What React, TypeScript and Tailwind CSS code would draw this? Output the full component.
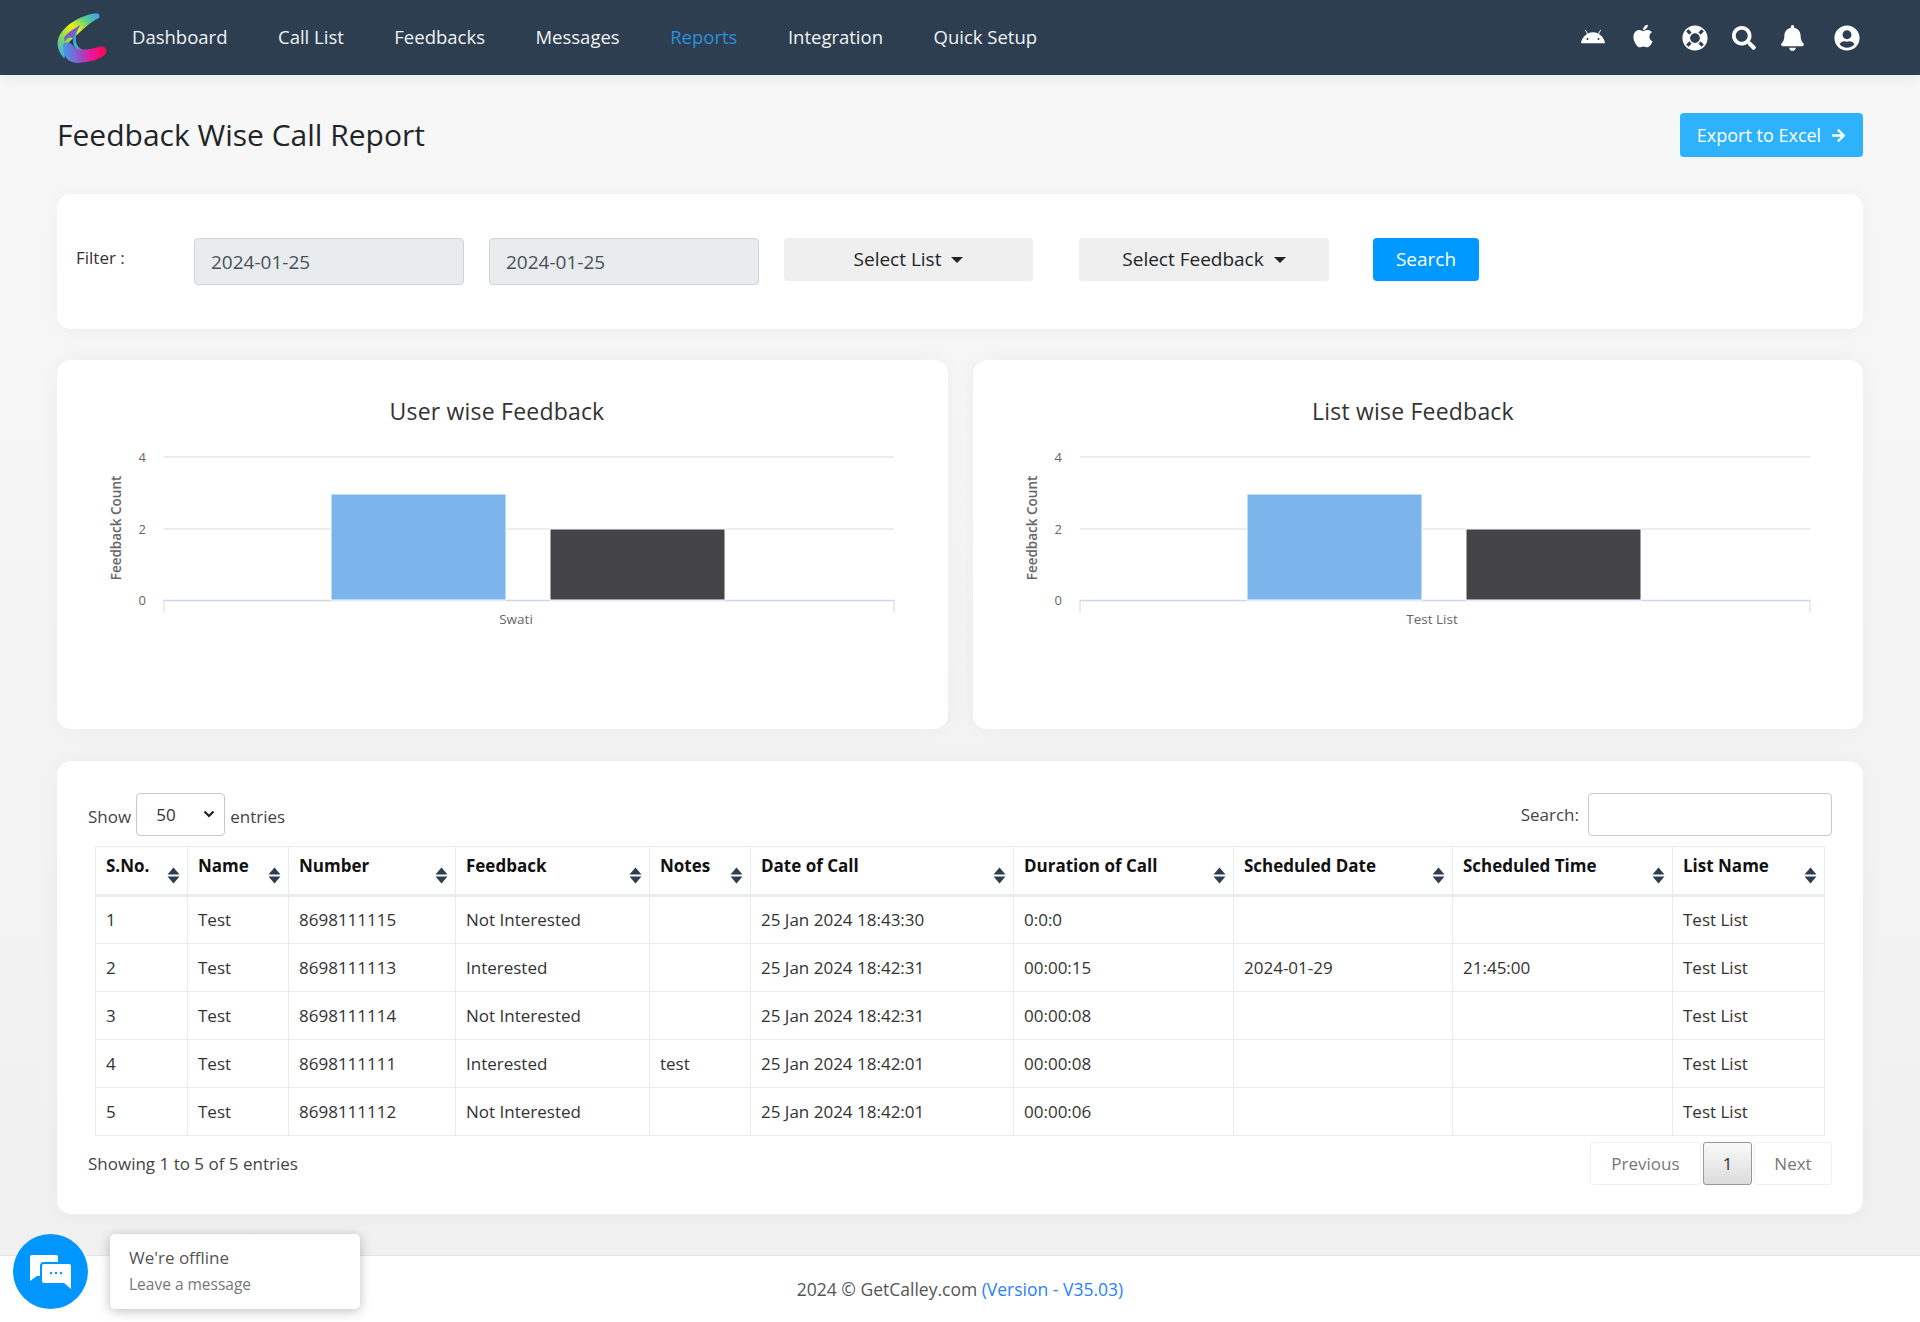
import { FaAndroid, FaApple, FaLifeRing, FaSearch, FaBell, FaUserCircle, FaArrowRight } from "react-icons/fa";

const navItems = ["Dashboard", "Call List", "Feedbacks", "Messages", "Reports", "Integration", "Quick Setup"];

const columns = [
  { label: "S.No.", w: "w-[92px]" },
  { label: "Name", w: "w-[101px]" },
  { label: "Number", w: "w-[167px]" },
  { label: "Feedback", w: "w-[194px]" },
  { label: "Notes", w: "w-[101px]" },
  { label: "Date of Call", w: "w-[263px]" },
  { label: "Duration of Call", w: "w-[220px]" },
  { label: "Scheduled Date", w: "w-[219px]" },
  { label: "Scheduled Time", w: "w-[220px]" },
  { label: "List Name", w: "w-[152px]" },
];

const rows = [
  ["1", "Test", "8698111115", "Not Interested", "", "25 Jan 2024 18:43:30", "0:0:0", "", "", "Test List"],
  ["2", "Test", "8698111113", "Interested", "", "25 Jan 2024 18:42:31", "00:00:15", "2024-01-29", "21:45:00", "Test List"],
  ["3", "Test", "8698111114", "Not Interested", "", "25 Jan 2024 18:42:31", "00:00:08", "", "", "Test List"],
  ["4", "Test", "8698111111", "Interested", "test", "25 Jan 2024 18:42:01", "00:00:08", "", "", "Test List"],
  ["5", "Test", "8698111112", "Not Interested", "", "25 Jan 2024 18:42:01", "00:00:06", "", "", "Test List"],
];

function Logo() {
  return (
    <svg width="50" height="50" viewBox="50 35 150 150" className="shrink-0">
      <defs>
        <linearGradient id="lgA" gradientUnits="userSpaceOnUse" x1="178" y1="42" x2="70" y2="175">
          <stop offset="0" stopColor="#3f9bf0" />
          <stop offset="0.22" stopColor="#55d08a" />
          <stop offset="0.45" stopColor="#f4ee10" />
          <stop offset="0.68" stopColor="#8fe04a" />
          <stop offset="1" stopColor="#38a8f0" />
        </linearGradient>
        <linearGradient id="lgB" gradientUnits="userSpaceOnUse" x1="70" y1="170" x2="198" y2="150">
          <stop offset="0" stopColor="#3f9fef" />
          <stop offset="0.35" stopColor="#8a58c8" />
          <stop offset="0.65" stopColor="#f0109a" />
          <stop offset="1" stopColor="#ff0a4c" />
        </linearGradient>
        <linearGradient id="lgC" gradientUnits="userSpaceOnUse" x1="120" y1="80" x2="150" y2="150">
          <stop offset="0" stopColor="#3f8fe8" />
          <stop offset="0.6" stopColor="#38b8d8" />
          <stop offset="1" stopColor="#e01aa0" />
        </linearGradient>
      </defs>
      <path d="M166 36 C176 35 182 44 175 51 C150 62 124 88 102 108 C84 122 78 132 72 172 C54 152 46 130 56 106 C72 72 120 42 166 36 Z" fill="url(#lgA)" />
      <path d="M72 108 C84 92 104 80 120 72 C108 90 104 104 100 112 C92 106 82 106 72 122 Z" fill="#7a5cc4" />
      <path d="M120 72 C106 92 102 118 112 134 C122 148 138 146 150 143 L156 150 C132 162 108 150 100 130 C94 112 104 90 120 72 Z" fill="url(#lgC)" />
      <path d="M68 128 C76 122 90 120 102 138 C114 152 130 148 176 137 C192 132 202 144 197 156 C186 172 150 184 112 185 C88 185 66 170 68 128 Z" fill="url(#lgB)" />
    </svg>
  );
}

function SortIcon() {
  return (
    <svg width="13" height="17" viewBox="0 0 13 17" className="shrink-0 mt-[9px] mr-[-3px]">
      <path d="M6.5 0.5 L12.5 7.5 H0.5 Z" fill="#2c3e50" />
      <path d="M0.5 9.5 H12.5 L6.5 16.5 Z" fill="#2c3e50" />
    </svg>
  );
}

function Chart({ dx, label }: { dx: number; label: string }) {
  return (
    <svg width="891" height="369" viewBox="0 0 891 369" className="block" style={{ fontFamily: "'Open Sans', sans-serif" }}>
      <text x={440 + dx} y="60" textAnchor="middle" fontSize="23" fill="#333333" letterSpacing="0.2">
        {label === "Swati" ? "User wise Feedback" : "List wise Feedback"}
      </text>
      <line x1="107" x2="837" y1="97" y2="97" stroke="#e6e6e6" strokeWidth="1.4" />
      <line x1="107" x2="837" y1="169" y2="169" stroke="#e6e6e6" strokeWidth="1.4" />
      <line x1="107" x2="837" y1="240.5" y2="240.5" stroke="#ccd6eb" strokeWidth="1.4" />
      <line x1="107" x2="107" y1="240" y2="252" stroke="#ccd6eb" />
      <line x1="837" x2="837" y1="240" y2="252" stroke="#ccd6eb" />
      <rect x="274" y="134" width="175" height="106" fill="#7cb5ec" stroke="#ffffff" strokeWidth="1" />
      <rect x="493" y="169" width="175" height="71" fill="#434348" stroke="#ffffff" strokeWidth="1" />
      <g fontSize="13" fill="#666666" textAnchor="end">
        <text x="89" y="102">4</text>
        <text x="89" y="174">2</text>
        <text x="89" y="245">0</text>
      </g>
      <text x="459" y="264" textAnchor="middle" fontSize="13.5" fill="#666666">{label}</text>
      <text transform="translate(64 168) rotate(-90)" textAnchor="middle" fontSize="13.5" fontWeight="600" fill="#666666">
        Feedback Count
      </text>
    </svg>
  );
}

export default function App() {
  return (
    <div className="relative min-h-[1322px] flex flex-col bg-gradient-to-b from-[#f8f8f8] to-[#f0f0f0] font-['Open_Sans',sans-serif] text-[#212529]">
      <nav className="h-[75px] bg-[#2c3e50] flex items-center pl-[57px] pr-[60px] shadow-[0_4px_12px_rgba(0,0,0,0.06)]">
        <Logo />
        <ul className="flex ml-[25px] gap-[50.5px] text-[18.5px] leading-none">
          {navItems.map((n) => (
            <li key={n} className={n === "Reports" ? "text-[#2d8fdc]" : "text-[#f0f2f4]"}>{n}</li>
          ))}
        </ul>
        <div className="ml-auto flex items-center text-white">
          <FaAndroid className="w-[24px] h-[24px]" />
          <FaApple className="w-[26px] h-[26px] ml-[25px] mb-[3px]" />
          <FaLifeRing className="w-[26px] h-[26px] ml-[26px]" />
          <FaSearch className="w-[24px] h-[24px] ml-[24px]" />
          <FaBell className="w-[25px] h-[26px] ml-[24px]" />
          <FaUserCircle className="w-[26px] h-[26px] ml-[29px]" />
        </div>
      </nav>

      <main className="px-[57px]">
        <div className="flex items-center justify-between pt-[38px]">
          <h1 className="text-[30px] leading-[44px] text-[#212529] font-normal">Feedback Wise Call Report</h1>
          <button className="w-[183px] h-[44px] bg-[#2db2fb] text-white text-[18px] rounded-[4px] flex items-center justify-center gap-[10px]">
            Export to Excel <FaArrowRight className="w-[15px] h-[15px]" />
          </button>
        </div>

        <section className="mt-[37px] h-[135px] bg-white rounded-[14px] shadow-[0_0_20px_rgba(0,0,0,0.04)] pl-[19px] pt-[44px] flex items-start">
          <span className="w-[118px] text-[17px] leading-[40px] text-[#333]">Filter :</span>
          <input readOnly value="2024-01-25" className="w-[270px] h-[47px] bg-[#e9ecef] border border-[#ced4da] rounded-[4px] px-[16px] text-[19px] text-[#495057]" />
          <input readOnly value="2024-01-25" className="ml-[25px] w-[270px] h-[47px] bg-[#e9ecef] border border-[#ced4da] rounded-[4px] px-[16px] text-[19px] text-[#495057]" />
          <button className="ml-[25px] w-[249px] h-[43px] bg-[#efefef] rounded-[4px] text-[19px] text-[#212529] flex items-center justify-center gap-[10px]">
            Select List <span className="w-0 h-0 border-x-[6px] border-x-transparent border-t-[6px] border-t-[#212529]" />
          </button>
          <button className="ml-[46px] w-[250px] h-[43px] bg-[#efefef] rounded-[4px] text-[19px] text-[#212529] flex items-center justify-center gap-[10px]">
            Select Feedback <span className="w-0 h-0 border-x-[6px] border-x-transparent border-t-[6px] border-t-[#212529]" />
          </button>
          <button className="ml-[44px] w-[106px] h-[43px] bg-[#0099ff] rounded-[4px] text-[19px] text-white">Search</button>
        </section>

        <section className="mt-[31px] grid grid-cols-[891px_890px] gap-[25px]">
          <div className="h-[369px] bg-white rounded-[14px] shadow-[0_0_20px_rgba(0,0,0,0.04)] overflow-hidden">
            <Chart dx={0} label="Swati" />
          </div>
          <div className="h-[369px] bg-white rounded-[14px] shadow-[0_0_20px_rgba(0,0,0,0.04)] overflow-hidden">
            <Chart dx={0} label="Test List" />
          </div>
        </section>

        <section className="mt-[32px] h-[453px] bg-white rounded-[14px] shadow-[0_0_20px_rgba(0,0,0,0.04)] px-[31px] pt-[32px] text-[17px]">
          <div className="flex items-start justify-between h-[43px]">
            <div className="flex items-center text-[#444] h-[43px] pt-[4px]">
              Show
              <div className="mx-[5px] mt-[-4px] w-[89px] h-[43px] border border-[#c8c8c8] rounded-[4px] flex items-center justify-between pl-[19px] pr-[9px] text-[#333]">
                50
                <svg width="12" height="8" viewBox="0 0 12 8" className="mb-[2px]"><path d="M1.5 1.5 L6 6 L10.5 1.5" fill="none" stroke="#222" strokeWidth="2.2" /></svg>
              </div>
              entries
            </div>
            <div className="flex items-center text-[#444] h-[43px]">
              Search:
              <input className="ml-[9px] w-[244px] h-[43px] border border-[#c8c8c8] rounded-[4px]" />
            </div>
          </div>

          <table className="mt-[10px] ml-[7px] w-[1729px] table-fixed border-collapse text-[17px]">
            <colgroup>
              {columns.map((c) => <col key={c.label} className={c.w} />)}
            </colgroup>
            <thead>
              <tr className="h-[49px]">
                {columns.map((c) => (
                  <th key={c.label} className="border border-[#e9ecef] border-b-[3px] px-[10px] py-0 text-left font-bold text-[#111]">
                    <div className="flex items-start justify-between">
                      <span className="leading-[24px] mt-[-4px]">{c.label}</span>
                      <SortIcon />
                    </div>
                  </th>
                ))}
              </tr>
            </thead>
            <tbody>
              {rows.map((r) => (
                <tr key={r[0]} className="h-[48px]">
                  {r.map((v, i) => (
                    <td key={i} className="border border-[#e9ecef] px-[10px] py-0 text-[#333]">{v}</td>
                  ))}
                </tr>
              ))}
            </tbody>
          </table>

          <div className="mt-[6px] flex items-center justify-between h-[43px]">
            <span className="text-[#444]">Showing 1 to 5 of 5 entries</span>
            <div className="flex gap-[2px] text-[#777]">
              <span className="w-[111px] h-[43px] flex items-center justify-center border border-[#f0f0f0] rounded-[3px]">Previous</span>
              <span className="w-[49px] h-[43px] flex items-center justify-center border border-[#979797] rounded-[3px] bg-gradient-to-b from-[#fafafa] to-[#dcdcdc] text-[#333]">1</span>
              <span className="w-[78px] h-[43px] flex items-center justify-center border border-[#f0f0f0] rounded-[3px]">Next</span>
            </div>
          </div>
        </section>
      </main>

      <footer className="mt-[41px] h-[67px] bg-white border-t border-[#e6e6e6] flex items-center justify-center text-[17.5px] text-[#555] pt-[1px]">
        2024 © GetCalley.com&nbsp;<span className="text-[#2a7fff]">(Version - V35.03)</span>
      </footer>

      <div className="absolute left-[13px] top-[1234px] w-[75px] h-[75px] rounded-full bg-[#0096ff] flex items-center justify-center">
        <svg width="44" height="36" viewBox="0 0 44 36">
          <path d="M3 1 H27 Q29 1 29 3 V8 H15 Q11 8 11 12 V22 H8 L1 27 V3 Q1 1 3 1 Z" fill="#ffffff" />
          <path d="M15 10 H40 Q42 10 42 12 V35 L35 29 H15 Q13 29 13 27 V12 Q13 10 15 10 Z" fill="#ffffff" />
          <circle cx="22" cy="19" r="1.2" fill="#0096ff" /><circle cx="27" cy="19" r="1.2" fill="#0096ff" /><circle cx="32" cy="19" r="1.2" fill="#0096ff" />
        </svg>
      </div>
      <div className="absolute left-[103px] top-[1264px] w-[15px] h-[15px] rotate-45 bg-white rounded-[2px]" />
      <div className="absolute left-[110px] top-[1234px] w-[250px] h-[75px] bg-white rounded-[5px] shadow-[0_2px_12px_rgba(0,0,0,0.25)] pl-[19px] pt-[12px]">
        <div className="text-[17px] leading-[24px] text-[#555]">We're offline</div>
        <div className="text-[15.5px] leading-[22px] mt-[3px] text-[#777]">Leave a message</div>
      </div>
    </div>
  );
}
